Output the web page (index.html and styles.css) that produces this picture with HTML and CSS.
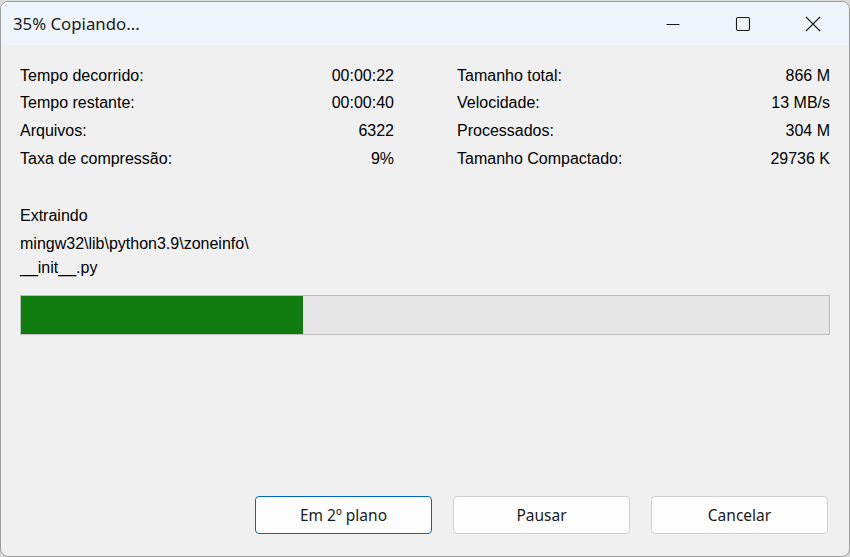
FILE: index.html
```html
<!DOCTYPE html>
<html lang="pt">
<head>
<meta charset="utf-8">
<title>35% Copiando...</title>
<link rel="stylesheet" href="styles.css">
</head>
<body>
<div class="window">
  <div class="titlebar">
    <div class="title">35% Copiando...</div>
    <div class="controls">
      <div class="ctl">
        <svg width="16" height="16" viewBox="0 0 16 16"><path d="M1.5 8.5h13" stroke="#1a1a1a" stroke-width="1.1" fill="none"/></svg>
      </div>
      <div class="ctl">
        <svg width="16" height="16" viewBox="0 0 16 16"><rect x="1.5" y="1.5" width="13" height="13" rx="1.6" stroke="#1a1a1a" stroke-width="1.1" fill="none"/></svg>
      </div>
      <div class="ctl">
        <svg width="16" height="16" viewBox="0 0 16 16"><path d="M1 1L15 15M15 1L1 15" stroke="#1a1a1a" stroke-width="1.1" fill="none"/></svg>
      </div>
    </div>
  </div>
  <div class="content">
    <div class="stats">
      <div class="group">
        <span class="lbl">Tempo decorrido:</span><span class="val">00:00:22</span>
        <span class="lbl">Tempo restante:</span><span class="val">00:00:40</span>
        <span class="lbl">Arquivos:</span><span class="val">6322</span>
        <span class="lbl">Taxa de compressão:</span><span class="val">9%</span>
      </div>
      <div class="group">
        <span class="lbl">Tamanho total:</span><span class="val">866 M</span>
        <span class="lbl">Velocidade:</span><span class="val">13 MB/s</span>
        <span class="lbl">Processados:</span><span class="val">304 M</span>
        <span class="lbl">Tamanho Compactado:</span><span class="val">29736 K</span>
      </div>
    </div>
    <div class="op">Extraindo</div>
    <div class="path">mingw32\lib\python3.9\zoneinfo\<br>__init__.py</div>
    <div class="progress"><div class="fill" style="width:34.9%"></div></div>
    <div class="spacer"></div>
    <div class="buttons">
      <button class="btn default">Em 2º plano</button>
      <button class="btn">Pausar</button>
      <button class="btn">Cancelar</button>
    </div>
  </div>
</div>
</body>
</html>
```
FILE: styles.css
```css
html, body {
  margin: 0;
  padding: 0;
  width: 850px;
  height: 557px;
  overflow: hidden;
  background: #d9d9d9;
}
.window {
  box-sizing: border-box;
  margin-top: 1px;
  width: 850px;
  height: 556px;
  border: 1px solid #9c9c9c;
  border-radius: 8px;
  overflow: hidden;
  background: #f0f0f0;
  display: flex;
  flex-direction: column;
}
.titlebar {
  height: 43px;
  flex: none;
  background: #eef4f9;
  display: flex;
  align-items: center;
  justify-content: space-between;
}
.title {
  padding-left: 12px;
  padding-bottom: 1px;
  font-family: "Noto Sans", "Open Sans", sans-serif;
  font-size: 16.8px;
  color: #1a1a1a;
}
.controls {
  display: flex;
  align-self: stretch;
  padding-right: 1px;
}
.ctl {
  width: 70px;
  display: flex;
  align-items: center;
  justify-content: center;
}
.ctl svg { display: block; }
.content {
  flex: 1;
  display: flex;
  flex-direction: column;
  padding: 17px 21px 22px 19px;
  font-family: "Liberation Sans", Arial, sans-serif;
  font-size: 16px;
  color: #000;
}
.stats {
  display: grid;
  grid-template-columns: 374px 373px;
  column-gap: 63px;
  margin-right: -1px;
}
.group {
  display: grid;
  grid-template-columns: 1fr auto;
  grid-auto-rows: 27.67px;
  align-items: center;
}
.val { text-align: right; }
.op {
  margin-top: 31px;
  line-height: 24px;
}
.path {
  margin-top: 4px;
  line-height: 24px;
}
.progress {
  margin-top: 15px;
  margin-right: -2px;
  height: 38px;
  border: 1px solid #bcbcbc;
  background: #e6e6e6;
}
.fill {
  height: 100%;
  background: #107c10;
}
.spacer { flex: 1; }
.buttons {
  display: flex;
  justify-content: flex-end;
  gap: 21px;
}
.btn {
  box-sizing: border-box;
  width: 177px;
  height: 38px;
  border: 1px solid #d1d1d1;
  border-radius: 4px;
  background: #fdfdfd;
  font-family: "Noto Sans", "Open Sans", sans-serif;
  font-size: 15.5px;
  color: #1a1a1a;
  padding: 0;
}
.btn.default {
  border-color: #0067c0;
}
```
